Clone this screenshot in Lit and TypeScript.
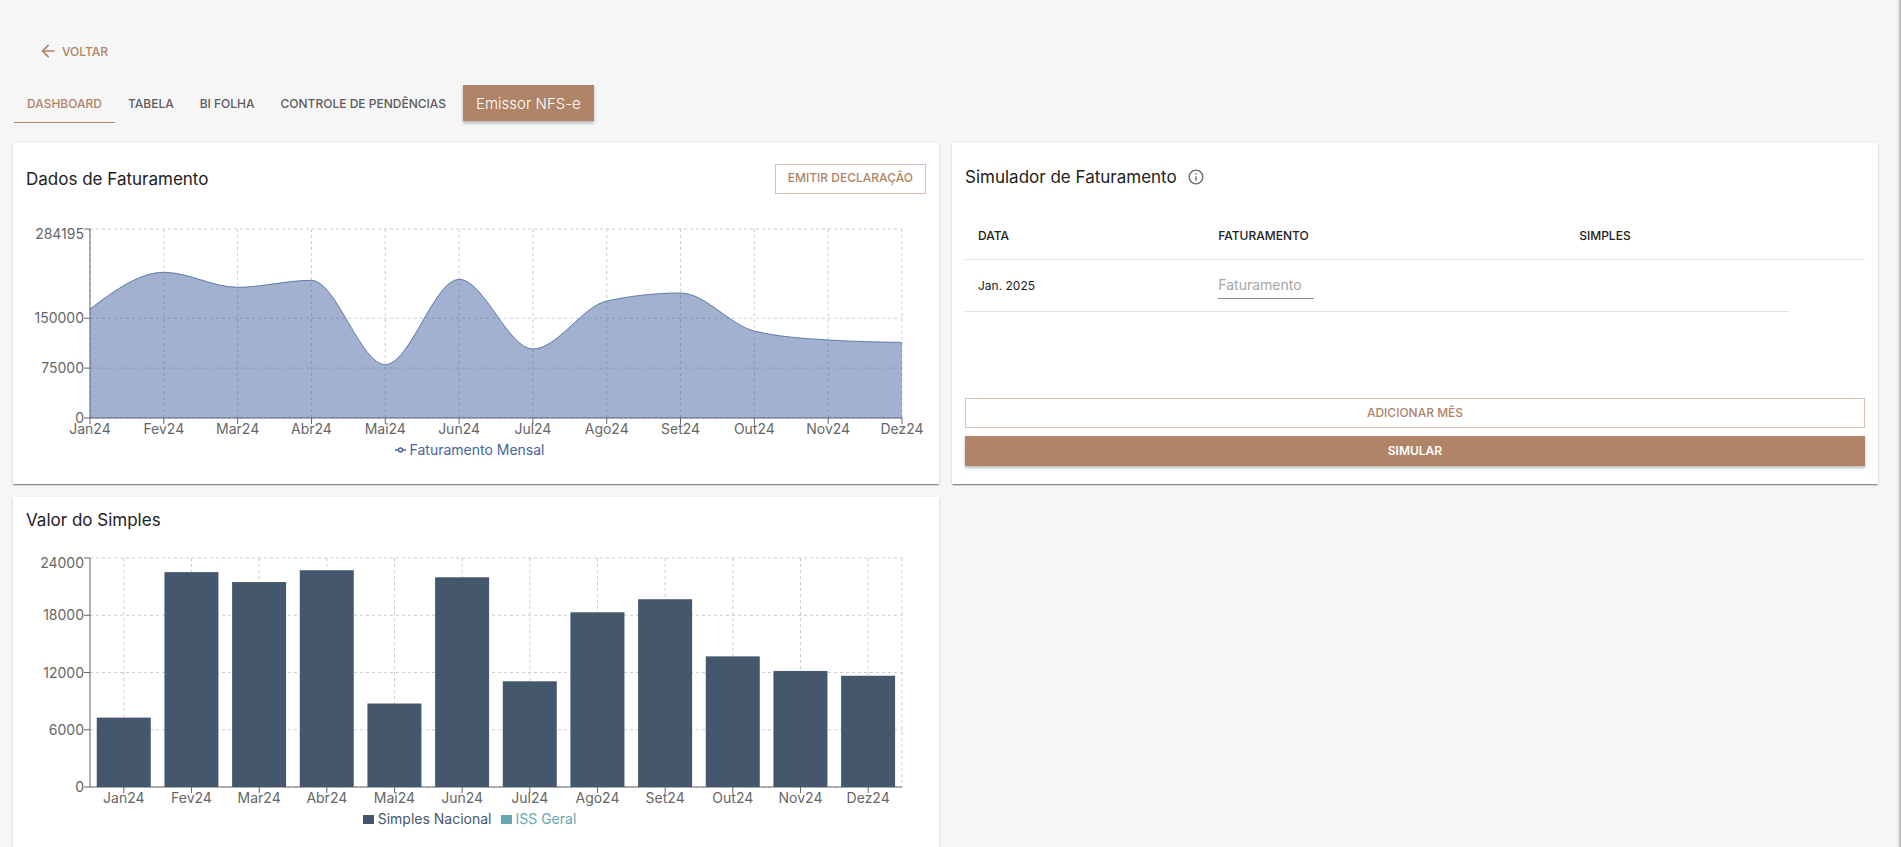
import { LitElement, html, svg, css, nothing } from "lit";
import { customElement, property, state } from "lit/decorators.js";
import { classMap } from "lit/directives/class-map.js";

const MONTHS = ["Jan24", "Fev24", "Mar24", "Abr24", "Mai24", "Jun24", "Jul24", "Ago24", "Set24", "Out24", "Nov24", "Dez24"];
const REVENUE = [163900, 219085, 196530, 207055, 80146, 208560, 103750, 175930, 187960, 130820, 117290, 113680];
const SIMPLES = [7275, 22520, 21480, 22720, 8750, 21980, 11080, 18310, 19680, 13690, 12160, 11660];

type Point = [number, number];

/* Monotone cubic interpolation through the points. */
function monotonePath(p: Point[]): string {
  const n = p.length;
  const slope: number[] = [];
  for (let i = 0; i < n - 1; i++) slope.push((p[i + 1][1] - p[i][1]) / (p[i + 1][0] - p[i][0]));
  const t: number[] = new Array(n).fill(0);
  for (let i = 1; i < n - 1; i++) {
    const a = slope[i - 1];
    const b = slope[i];
    t[i] = a * b <= 0 ? 0 : Math.sign(a) * Math.min(Math.abs(a), Math.abs(b), Math.abs(a + b) / 4) * 2;
  }
  t[0] = (3 * slope[0] - t[1]) / 2;
  t[n - 1] = (3 * slope[n - 2] - t[n - 2]) / 2;
  let d = `M${p[0][0]},${p[0][1]}`;
  for (let i = 0; i < n - 1; i++) {
    const h = (p[i + 1][0] - p[i][0]) / 3;
    d += `C${p[i][0] + h},${p[i][1] + t[i] * h},${p[i + 1][0] - h},${p[i + 1][1] - t[i + 1] * h},${p[i + 1][0]},${p[i + 1][1]}`;
  }
  return d;
}

@customElement("month-chart")
class MonthChart extends LitElement {
  @property() kind: "area" | "bar" = "area";
  @property() name = "";
  @property({ attribute: false }) values: number[] = [];
  @property({ attribute: false }) ticks: number[] = [];
  @property({ type: Number }) plotHeight = 189;
  @state() private width = 900;

  private observer = new ResizeObserver((entries) => {
    this.width = Math.round(entries[0].contentRect.width);
  });

  static styles = css`
    :host {
      display: block;
      min-width: 0;
    }
    svg {
      display: block;
      width: 100%;
    }
    text {
      font: 14px Inter, "Liberation Sans", sans-serif;
      fill: #666;
    }
    .end {
      text-anchor: end;
    }
    .middle {
      text-anchor: middle;
    }
    .grid {
      stroke: #ccc;
      stroke-dasharray: 3 3;
    }
    .axis {
      stroke: #666;
    }
    .fill {
      fill: #4664a0;
      fill-opacity: 0.5;
    }
    .line {
      fill: none;
      stroke: #4664a0;
      stroke-opacity: 0.8;
    }
    .bar {
      fill: #44576d;
    }
  `;

  connectedCallback() {
    super.connectedCallback();
    this.observer.observe(this);
  }

  disconnectedCallback() {
    this.observer.disconnect();
    super.disconnectedCallback();
  }

  render() {
    const left = 64;
    const right = this.width - 24;
    const top = 8;
    const bottom = top + this.plotHeight;
    const height = bottom + 23;
    const max = this.ticks[this.ticks.length - 1];
    const y = (v: number) => bottom - (v / max) * this.plotHeight;
    const isBar = this.kind === "bar";
    const band = (right - left) / (isBar ? MONTHS.length : MONTHS.length - 1);
    const x = (i: number) => left + band * (i + (isBar ? 0.5 : 0));
    const curve = monotonePath(this.values.map((v, i): Point => [x(i), y(v)]));

    return html`
      <svg height=${height} viewBox="0 0 ${this.width} ${height}" role="img" aria-label=${this.name}>
        ${this.ticks.map((v) => svg`<line class="grid" x1=${left} x2=${right} y1=${y(v)} y2=${y(v)} />`)}
        ${MONTHS.map((_, i) => svg`<line class="grid" x1=${x(i)} x2=${x(i)} y1=${top} y2=${bottom} />`)}
        ${isBar ? svg`<line class="grid" x1=${right} x2=${right} y1=${top} y2=${bottom} />` : nothing}
        <line class="axis" x1=${left} x2=${right} y1=${bottom} y2=${bottom} />
        <line class="axis" x1=${left} x2=${left} y1=${top} y2=${bottom} />
        ${this.ticks.map(
          (v, i) => svg`
            <line class="axis" x1=${left - 6} x2=${left} y1=${y(v)} y2=${y(v)} />
            <text class="end" x=${left - 6} y=${y(v) + (i === this.ticks.length - 1 ? 10 : 5)}>${v}</text>`,
        )}
        ${MONTHS.map(
          (m, i) => svg`
            <line class="axis" x1=${x(i)} x2=${x(i)} y1=${bottom} y2=${bottom + 6} />
            <text class="middle" x=${x(i)} y=${bottom + 16}>${m}</text>`,
        )}
        ${isBar
          ? this.values.map(
              (v, i) => svg`<rect class="bar" x=${x(i) - band * 0.4} y=${y(v)} width=${Math.floor(band * 0.8)} height=${bottom - y(v)} />`,
            )
          : svg`
              <path class="fill" d="${curve}L${right},${bottom}L${left},${bottom}Z" />
              <path class="line" d=${curve} />`}
      </svg>
    `;
  }
}

@customElement("app-root")
class AppRoot extends LitElement {
  @state() private tab = "DASHBOARD";
  @state() private months = ["Jan. 2025"];

  static styles = css`
    :host {
      display: block;
      box-sizing: border-box;
      height: 100vh;
      overflow: hidden;
      border-right: 2px solid #bdbdbd;
      background: #f6f6f6;
      color: #212121;
      font-family: Inter, "Liberation Sans", sans-serif;
      font-size: 12px;
    }
    * {
      box-sizing: border-box;
    }
    button,
    input {
      margin: 0;
      border: 0;
      border-radius: 0;
      background: none;
      color: inherit;
      font: inherit;
    }
    button {
      cursor: pointer;
    }
    main {
      height: 100%;
      overflow-y: auto;
      scrollbar-width: none;
      padding: 36px 19px 24px 13px;
      border-right: 2px solid #eeeeee;
    }
    .back {
      display: flex;
      align-items: center;
      gap: 4px;
      height: 30px;
      margin-left: 25px;
      padding: 0;
      color: #b08467;
      font-weight: 500;
    }
    .back svg {
      display: block;
      fill: currentColor;
    }
    .tabs {
      display: flex;
      align-items: flex-start;
      height: 38px;
      margin-top: 19px;
      padding-left: 1px;
    }
    .tab {
      height: 38px;
      padding: 0 13px;
      border-bottom: 1px solid transparent;
      color: #5c5c5c;
      font-weight: 500;
      white-space: nowrap;
    }
    .tab.active {
      border-bottom-color: #b08467;
      color: #b08467;
    }
    .issuer {
      height: 36px;
      margin-left: 4px;
      padding: 0 13px;
      background: #b08467;
      box-shadow: 0 2px 3px rgba(0, 0, 0, 0.28);
      color: #fff;
      font-size: 15px;
      font-weight: 300;
      white-space: nowrap;
    }
    .cards {
      display: grid;
      grid-template-columns: minmax(0, 1fr) minmax(0, 1fr);
      gap: 13px;
      margin-top: 20px;
    }
    .card {
      display: flex;
      flex-direction: column;
      padding: 21px 13px 25px;
      background: #fff;
      box-shadow: 0 2px 1px -1px rgba(0, 0, 0, 0.3), 0 1px 1px rgba(0, 0, 0, 0.14), 0 1px 3px rgba(0, 0, 0, 0.12);
    }
    .card.compact {
      padding-top: 8px;
    }
    .card.actions-end {
      padding-top: 19px;
      padding-bottom: 18px;
    }
    .head {
      display: flex;
      align-items: center;
      gap: 10px;
      height: 30px;
      margin-bottom: 27px;
    }
    .compact .head {
      margin-bottom: 15px;
    }
    .actions-end .head {
      margin-bottom: 20px;
    }
    h2 {
      margin: 0;
      font-size: 17px;
      font-weight: 400;
    }
    .head .outlined {
      margin-left: auto;
      padding: 0 12px;
    }
    .info {
      fill: #757575;
    }
    .outlined,
    .contained {
      height: 30px;
      font-weight: 500;
    }
    .outlined {
      padding-bottom: 3px;
      border: 1px solid #d7c1b3;
      color: #b08467;
    }
    .contained {
      padding-bottom: 3px;
      background: #b08467;
      box-shadow: 0 2px 3px rgba(0, 0, 0, 0.28);
      color: #fff;
      font-weight: 600;
    }
    .head .outlined {
      padding-bottom: 3px;
    }
    .legend {
      display: flex;
      justify-content: center;
      gap: 9px;
      height: 18px;
      margin: 0;
      padding: 0 13px 0 0;
      list-style: none;
      font-size: 14px;
      line-height: 18px;
    }
    .legend li {
      display: flex;
      align-items: center;
      gap: 4px;
    }
    .blue {
      color: #4664a0;
    }
    .slate {
      color: #44576d;
    }
    .teal {
      color: #65a8b0;
    }
    .swatch {
      width: 11px;
      height: 9px;
      background: currentColor;
    }
    .marker {
      fill: none;
      stroke: currentColor;
      stroke-width: 1.4;
    }
    table {
      width: 100%;
      border-collapse: separate;
      border-spacing: 0;
      table-layout: fixed;
    }
    th,
    td {
      padding: 0 13px;
      border-bottom: 1px solid #e0e0e0;
      text-align: left;
      font-weight: 400;
    }
    th {
      height: 48px;
      font-weight: 500;
    }
    td {
      height: 52px;
    }
    .date {
      width: 26.7%;
    }
    .value {
      width: 40.1%;
    }
    .tax {
      width: 24.8%;
    }
    .amount {
      display: block;
      width: 96px;
      height: 27px;
      padding: 0 0 2px;
      border-bottom: 1px solid #8c8c8c;
      outline: none;
      font-size: 14px;
    }
    .amount::placeholder {
      color: #a6a6a6;
      opacity: 1;
    }
    .actions {
      display: flex;
      flex-direction: column;
      gap: 8px;
      margin-top: auto;
    }
  `;

  private addMonth() {
    const names = ["Jan.", "Fev.", "Mar.", "Abr.", "Mai.", "Jun.", "Jul.", "Ago.", "Set.", "Out.", "Nov.", "Dez."];
    const n = this.months.length;
    this.months = [...this.months, `${names[n % 12]} ${2025 + Math.floor(n / 12)}`];
  }

  render() {
    return html`
      <main>
        <button class="back">
          <svg width="20" height="20" viewBox="0 0 24 24" aria-hidden="true">
            <path d="M20 11H7.83l5.59-5.59L12 4l-8 8 8 8 1.41-1.41L7.83 13H20v-2z" />
          </svg>
          VOLTAR
        </button>
        <nav class="tabs">
          ${["DASHBOARD", "TABELA", "BI FOLHA", "CONTROLE DE PENDÊNCIAS"].map(
            (t) => html`<button class=${classMap({ tab: true, active: t === this.tab })} @click=${() => (this.tab = t)}>${t}</button>`,
          )}
          <button class="issuer">Emissor NFS-e</button>
        </nav>
        <div class="cards">
          <section class="card">
            <div class="head">
              <h2>Dados de Faturamento</h2>
              <button class="outlined">EMITIR DECLARAÇÃO</button>
            </div>
            <month-chart
              kind="area"
              name="Faturamento Mensal"
              .values=${REVENUE}
              .ticks=${[0, 75000, 150000, 284195]}
              .plotHeight=${189}
            ></month-chart>
            <ul class="legend">
              <li class="blue">
                <svg class="marker" width="11" height="8" viewBox="0 0 11 8" aria-hidden="true">
                  <path d="M0 4H3.5M7.5 4H11" />
                  <circle cx="5.5" cy="4" r="2" />
                </svg>
                Faturamento Mensal
              </li>
            </ul>
          </section>
          <section class="card actions-end">
            <div class="head">
              <h2>Simulador de Faturamento</h2>
              <svg class="info" width="18" height="18" viewBox="0 0 24 24" role="img" aria-label="Informações">
                <path
                  d="M11 7h2v2h-2zm0 4h2v6h-2zm1-9C6.48 2 2 6.48 2 12s4.48 10 10 10 10-4.48 10-10S17.52 2 12 2zm0 18c-4.41 0-8-3.59-8-8s3.59-8 8-8 8 3.59 8 8-3.59 8-8 8z"
                />
              </svg>
            </div>
            <table>
              <thead>
                <tr>
                  <th class="date">DATA</th>
                  <th class="value">FATURAMENTO</th>
                  <th class="tax">SIMPLES</th>
                  <th></th>
                </tr>
              </thead>
              <tbody>
                ${this.months.map(
                  (m) => html`<tr>
                    <td>${m}</td>
                    <td><input class="amount" type="text" placeholder="Faturamento" aria-label="Faturamento ${m}" /></td>
                    <td></td>
                  </tr>`,
                )}
              </tbody>
            </table>
            <div class="actions">
              <button class="outlined" @click=${this.addMonth}>ADICIONAR MÊS</button>
              <button class="contained">SIMULAR</button>
            </div>
          </section>
          <section class="card compact">
            <div class="head"><h2>Valor do Simples</h2></div>
            <month-chart
              kind="bar"
              name="Valor do Simples"
              .values=${SIMPLES}
              .ticks=${[0, 6000, 12000, 18000, 24000]}
              .plotHeight=${229}
            ></month-chart>
            <ul class="legend">
              <li class="slate"><span class="swatch"></span>Simples Nacional</li>
              <li class="teal"><span class="swatch"></span>ISS Geral</li>
            </ul>
          </section>
        </div>
      </main>
    `;
  }
}
